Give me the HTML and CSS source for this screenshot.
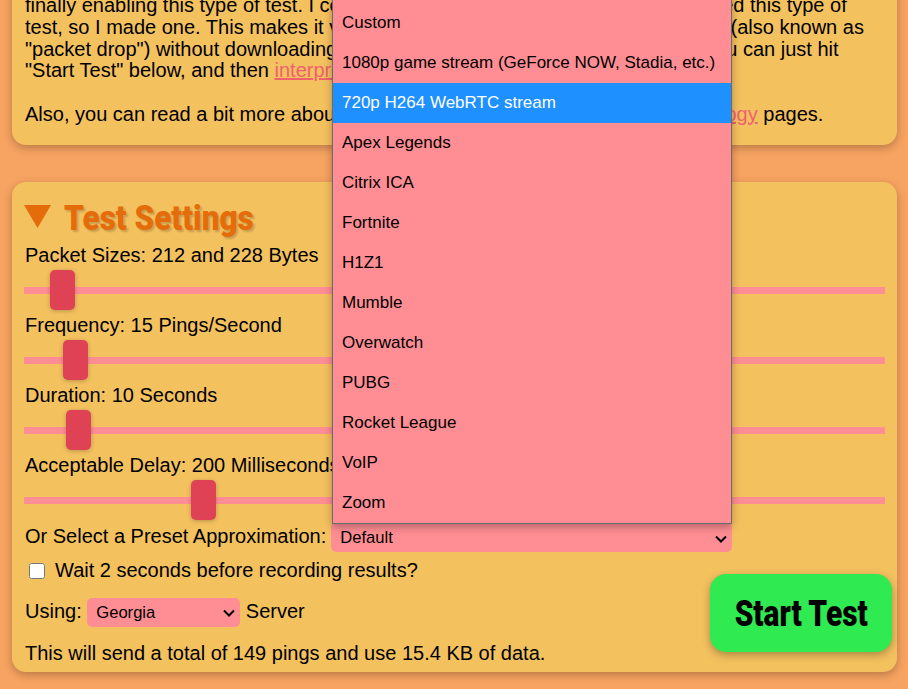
FILE: index.html
```html
<!DOCTYPE html>
<html lang="en">
<head>
<meta charset="utf-8">
<title>Packet Loss Test</title>
<link rel="stylesheet" href="styles.css">
</head>
<body>
<main class="page">
  <section class="card intro">
    finally enabling this type of test. I couldn't find any websites online yet that offered this type of<br>
    test, so I made one. This makes it very easy to quickly test out your packet loss (also known as<br>
    "packet drop") without downloading any software or running any commands. You can just hit<br>
    "Start Test" below, and then <a href="#">interpret the results</a>.<br><br>
    Also, you can read a bit more about this packet test on our About and <a href="#">Methodology</a> pages.
  </section>
  <section class="card settings">
    <h2 class="heading"><svg class="caret" viewBox="0 0 27 23"><path d="M0 0H27L13.500 23Z"/></svg><span class="heading-text">Test Settings</span></h2>
    <div class="field">Packet Sizes: 212 and 228 Bytes</div>
    <input class="slider" type="range" min="0" max="836" value="26">
    <div class="field">Frequency: 15 Pings/Second</div>
    <input class="slider" type="range" min="0" max="836" value="39">
    <div class="field">Duration: 10 Seconds</div>
    <input class="slider" type="range" min="0" max="836" value="42">
    <div class="field">Acceptable Delay: 200 Milliseconds</div>
    <input class="slider" type="range" min="0" max="836" value="167">
    <div class="preset">
      <label>Or Select a Preset Approximation:</label>
      <select class="pick pick-wide"><option>Default</option></select>
    </div>
    <label class="wait"><input class="check" type="checkbox">Wait 2 seconds before recording results?</label>
    <div class="server-line">Using: <select class="pick pick-server"><option>Georgia</option></select> Server</div>
    <div class="total">This will send a total of 149 pings and use 15.4 KB of data.</div>
    <button class="start" type="button"><span class="start-text">Start Test</span></button>
    <ul class="menu">
      <li>Default</li>
      <li>Custom</li>
      <li>1080p game stream (GeForce NOW, Stadia, etc.)</li>
      <li class="active">720p H264 WebRTC stream</li>
      <li>Apex Legends</li>
      <li>Citrix ICA</li>
      <li>Fortnite</li>
      <li>H1Z1</li>
      <li>Mumble</li>
      <li>Overwatch</li>
      <li>PUBG</li>
      <li>Rocket League</li>
      <li>VoIP</li>
      <li>Zoom</li>
    </ul>
  </section>
</main>
</body>
</html>
```
FILE: styles.css
```css
* { box-sizing: border-box; }
html, body { margin: 0; height: 689px; overflow: hidden; }
body {
  background: #f7a361;
  font-family: "Liberation Sans", Arial, sans-serif;
  font-size: 20px;
  line-height: 21.67px;
  color: #000;
}
.page { margin-top: -40px; padding: 0 11px 0 12px; }
.card {
  background: #f4c15f;
  border-radius: 14px;
  box-shadow: 0 3px 8px rgba(0, 0, 0, .25);
  padding: 0 13px;
}
.intro { height: 185px; padding-top: 35.4px; margin-bottom: 37px; white-space: nowrap; }
.intro a { color: #f0616f; }
.settings { position: relative; height: 490px; padding-top: 14px; }
.heading {
  display: flex;
  align-items: center;
  gap: 13px;
  height: 45px;
  margin: 0 0 3px -1px;
  color: #e46c0a;
  font-size: 35px;
  font-weight: 900;
  font-family: Roboto, sans-serif;
  text-shadow: 2px 2px 2px rgba(0, 0, 0, .18);
}
.heading-text { display: inline-block; transform: scaleX(.9); transform-origin: left center; }
.caret { width: 27px; height: 23px; margin-bottom: 5px; fill: #e46c0a; }
.field { height: 22px; line-height: 23px; }
.slider {
  display: block;
  appearance: none;
  -webkit-appearance: none;
  width: 861px;
  height: 40px;
  margin: 4px 0 4px -1px;
  background: transparent;
}
.slider::-webkit-slider-runnable-track {
  height: 7px;
  background: #ff8e94;
}
.slider::-webkit-slider-thumb {
  -webkit-appearance: none;
  width: 25px;
  height: 40px;
  margin-top: -17px;
  border-radius: 5px;
  background: #e04255;
  box-shadow: 0 1px 4px rgba(0, 0, 0, .25);
}
.preset { display: flex; gap: 5px; align-items: center; height: 30px; margin-top: -2px; }
.pick {
  appearance: none;
  -webkit-appearance: none;
  background: #ff8e94 url("data:image/svg+xml,%3Csvg xmlns='http://www.w3.org/2000/svg' width='12' height='8' viewBox='0 0 12 8'%3E%3Cpath d='M1 1.500l5 5 5-5' fill='none' stroke='%23000' stroke-width='2'/%3E%3C/svg%3E") no-repeat right 5px center;
  border: 0;
  border-radius: 5px;
  font-family: "Liberation Sans", Arial, sans-serif;
  font-size: 16.6px;
  color: #000;
  padding: 0 9px;
}
.pick-wide { width: 401px; height: 30px; background-position: right 5px top 13px; }
.pick-server { width: 153px; height: 29px; }
.wait { display: flex; align-items: center; height: 22px; margin-top: 8px; }
.check { width: 16px; height: 16px; margin: 0 10px 0 4px; }
.server-line { height: 29px; line-height: 29px; margin-top: 15px; }
.start {
  position: absolute;
  right: 5px;
  bottom: 20px;
  width: 182px;
  height: 78px;
  padding: 2px 0 0;
  border: 0;
  border-radius: 16px;
  background: #30ea52;
  box-shadow: 0 3px 8px rgba(0, 0, 0, .3);
  color: #000;
  font-size: 36px;
  font-weight: 900;
  font-family: Roboto, sans-serif;
}
.start-text { display: inline-block; transform: scaleX(.83); }
.total { margin-top: 17px; }
.menu {
  position: absolute;
  left: 320px;
  top: -220px;
  width: 400px;
  margin: 0;
  padding: 0;
  list-style: none;
  background: #ff8e94;
  border: 1px solid #6b6b6b;
  box-shadow: 0 3px 8px rgba(0, 0, 0, .3);
  font-size: 17px;
}
.menu li { height: 40px; line-height: 40px; padding-left: 9px; }
.menu .active { background: #1e90ff; color: #fff; }
```
